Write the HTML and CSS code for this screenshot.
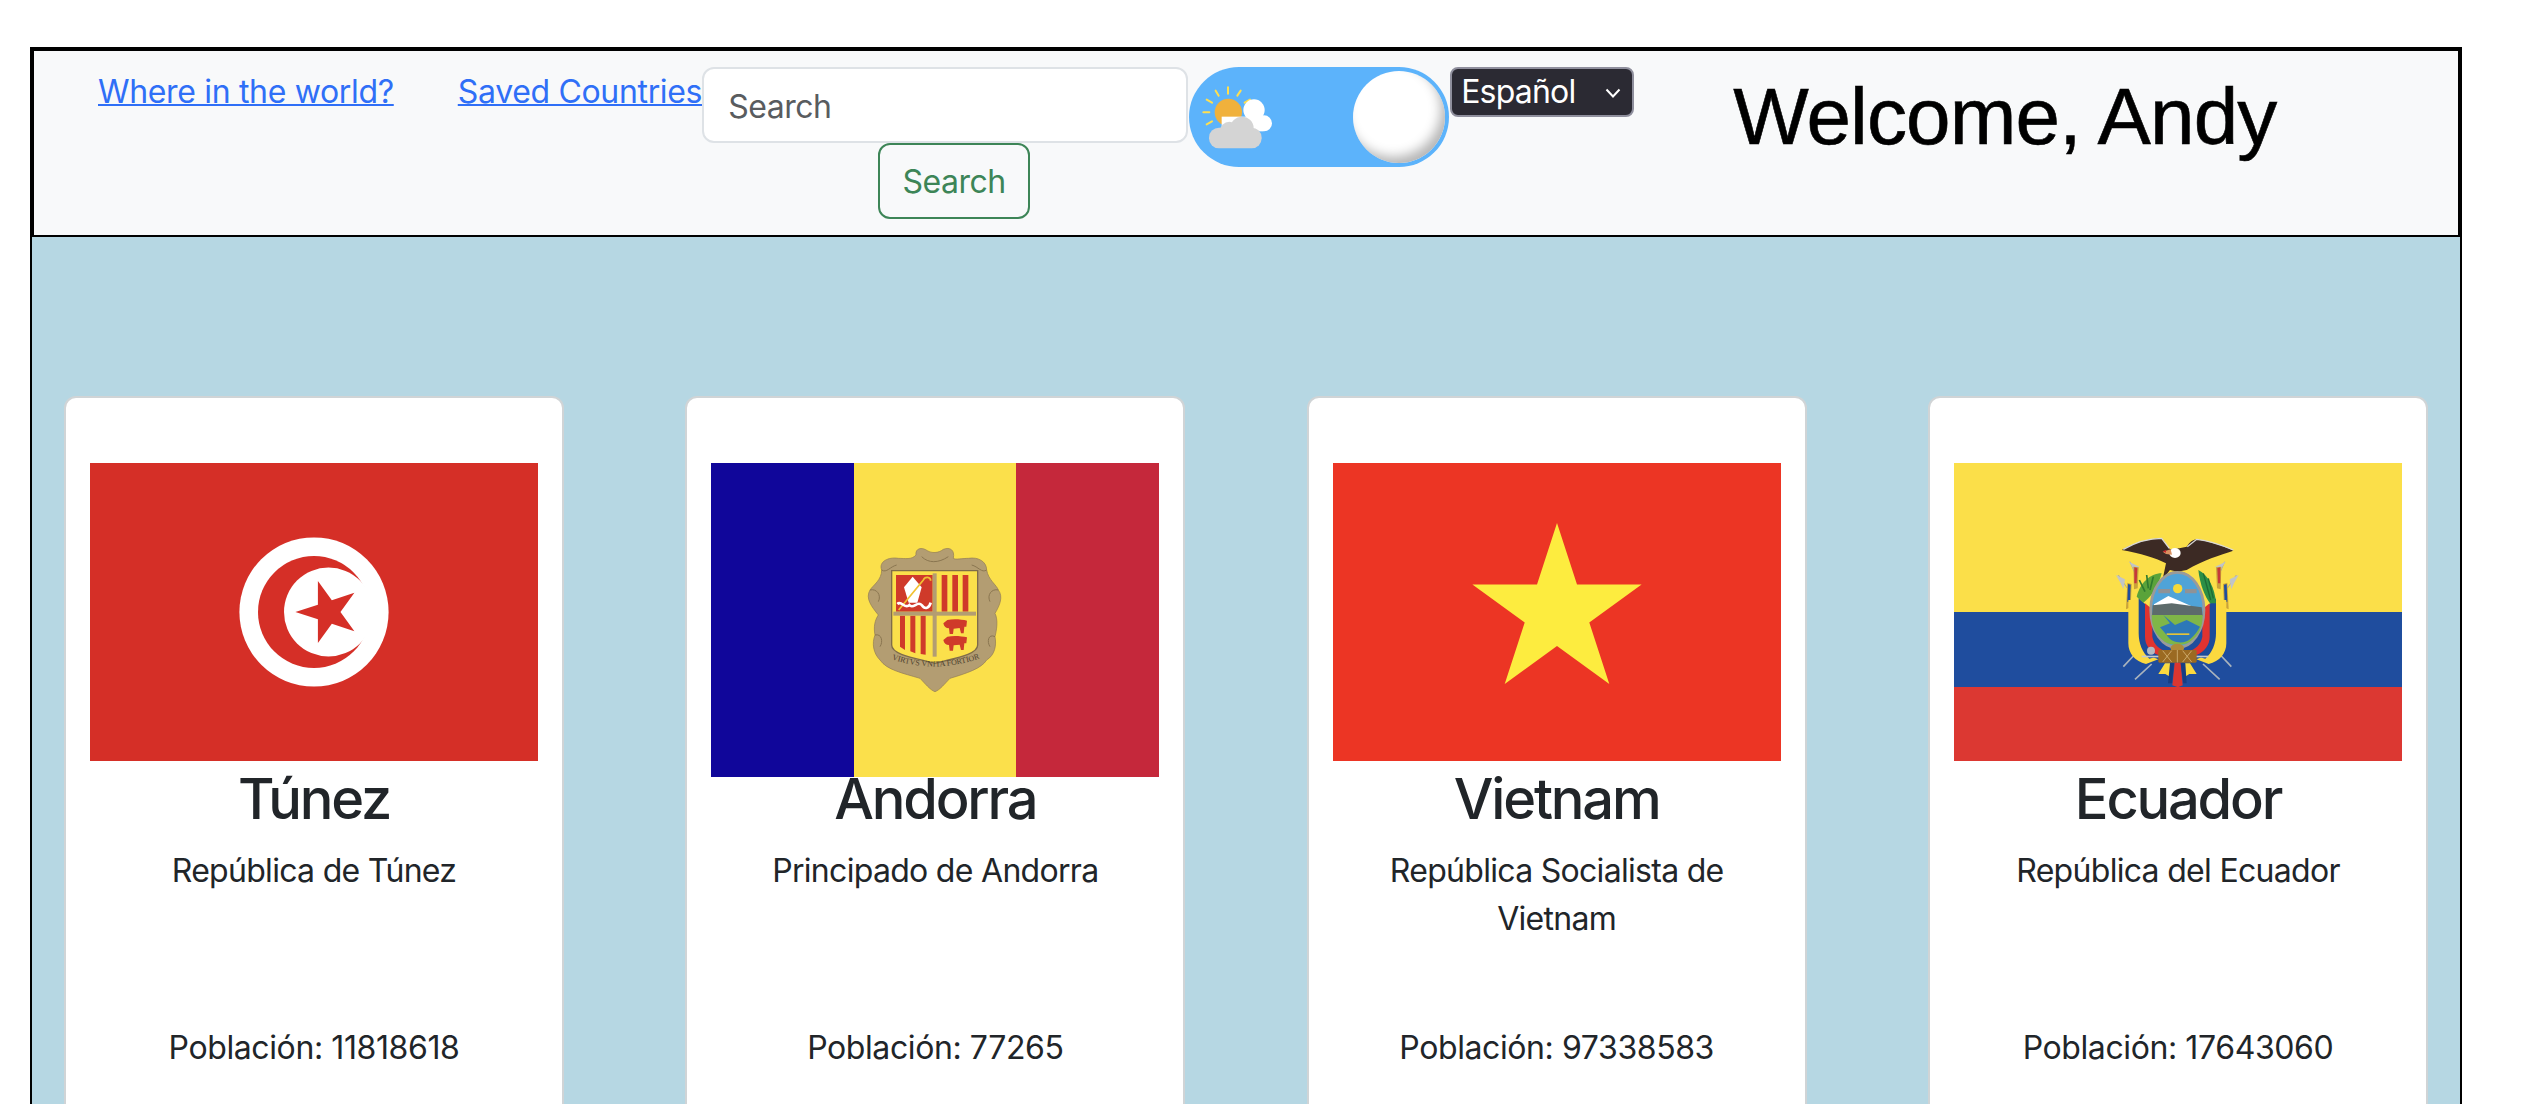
FILE: index.html
```html
<!DOCTYPE html>
<html>
	<head>
		<meta charset="utf-8">
		<title>Where in the world?</title>
		<link rel="stylesheet" href="styles.css">
	</head>
	<body>
		<div class="page">
			<nav class="topbar">
				<a class="nav-link" href="#">Where in the world?</a>
				<a class="nav-link" href="#">Saved Countries</a>
				<form class="search">
					<input class="search-input" type="text" placeholder="Search">
					<button class="search-btn" type="button">Search</button>
				</form>
				<div class="toggle">
					<svg class="toggle-icon" viewBox="60 90 225 195">
						<g stroke="#ffdf4f" stroke-width="6" stroke-linecap="round">
							<path d="M144 97V116M107 107L116 122M80 134L96 143M70 172H88M80 208L96 199M172 122L182 107M194 143L210 134"/>
						</g>
						<circle cx="145" cy="172" r="41" fill="#f0b13c"/>
						<g fill="#fff">
							<circle cx="222" cy="165" r="32"/>
							<circle cx="252" cy="205" r="24"/>
							<rect x="125" y="185" width="125" height="44"/>
						</g>
						<g fill="#d4d4d4">
							<circle cx="186" cy="220" r="35"/>
							<circle cx="148" cy="228" r="28"/>
							<rect x="87" y="218" width="158" height="62" rx="30"/>
						</g>
					</svg>
					<span class="knob"></span>
				</div>
				<div class="lang">
					<select class="lang-select">
						<option>Español</option>
						<option>English</option>
					</select>
					<svg class="lang-arrow" viewBox="0 0 16 10"><path d="M1.5 1.5L8 8.5L14.5 1.5" fill="none" stroke="#fff" stroke-width="2"/></svg>
				</div>
				<h1 class="welcome">Welcome, Andy</h1>
			</nav>

			<main class="cards">
				<div class="card">
					<div class="flag-box">
						<svg class="flag" width="448" height="298" viewBox="0 0 448 298">
							<rect width="448" height="298" fill="#d52f27"/>
							<circle cx="224" cy="149" r="74.6" fill="#fff"/>
							<circle cx="224" cy="149" r="56" fill="#d52f27"/>
							<circle cx="238.5" cy="149" r="44.5" fill="#fff"/>
							<polygon fill="#d52f27" points="205.4,149 227.9,141.7 227.9,118 241.85,137.2 264.4,129.8 250.45,149 264.4,168.2 241.85,160.8 227.9,180 227.9,156.3"/>
						</svg>
					</div>
					<h3 class="name">Túnez</h3>
					<p class="official">República de Túnez</p>
					<p class="people">Población: 11818618</p>
				</div>

				<div class="card">
					<div class="flag-box">
						<svg class="flag" width="448" height="314" viewBox="0 0 448 314">
							<rect width="143" height="314" fill="#10069a"/>
							<rect x="143" width="162" height="314" fill="#fbe04b"/>
							<rect x="305" width="143" height="314" fill="#c5283b"/>
							<g transform="translate(129 67) scale(.33333)">
								<path fill="#b39d72" stroke="#8f7a55" stroke-width="2" d="M228 75C225 55 245 50 262 62C275 70 295 70 310 58C330 50 345 60 340 85C345 90 370 85 385 85C415 80 440 95 440 120C445 150 470 165 475 180C490 200 480 225 465 250C475 270 470 300 465 320C470 345 465 375 440 390C425 415 380 430 330 445C315 460 300 480 285 485C270 480 255 460 240 445C190 430 140 420 120 390C100 370 95 340 105 315C100 290 105 270 115 255C95 230 75 205 90 180C100 165 125 150 125 120C115 95 145 80 175 85C195 85 215 90 228 75Z"/>
								<g fill="none" stroke="#8a7550" stroke-width="3">
									<path d="M125 120C140 130 150 110 170 105M440 120C425 130 415 110 395 105M90 180C110 175 125 195 115 215M475 180C455 175 440 195 450 215M105 315C125 310 130 335 120 350M465 320C445 310 440 335 450 350M245 80C265 100 295 100 325 80"/>
								</g>
								<path fill="#fbe04b" stroke="#7f6c4a" stroke-width="4" d="M155 122H413V345C413 375 340 385 285 400C230 385 155 375 155 345Z"/>
								<rect x="168" y="135" width="110" height="110" fill="#cf3a2a"/>
								<polygon points="218,140 245,172 232,218 206,218 192,172" fill="#fff"/>
								<path d="M176 240L250 150C255 138 272 140 272 152" fill="none" stroke="#f1c232" stroke-width="5"/>
								<path d="M172 222C185 210 195 240 208 225C220 240 232 210 245 225C255 240 268 235 272 218" fill="none" stroke="#fff" stroke-width="8"/>
								<g fill="#cf3a2a">
									<rect x="305" y="135" width="17" height="110"/>
									<rect x="337" y="135" width="17" height="110"/>
									<rect x="368" y="135" width="17" height="110"/>
									<path d="M180 257H195V360L180 350ZM211 257H226V370L211 364ZM242 257H257V374L242 372Z"/>
								</g>
								<rect x="278" y="130" width="12" height="250" fill="#b39d72"/>
								<rect x="160" y="245" width="248" height="12" fill="#b39d72"/>
								<path id="cow" d="M322 270C340 266 365 268 381 272L379 290L373 290L371 310L363 310L359 294L341 296L339 312L329 312L327 295C318 295 312 290 310 280Z" fill="#cf3a2a"/>
								<use href="#cow" y="50"/>
								<path id="motto" d="M155 388Q285 432 420 385" fill="none"/>
								<text class="motto"><textPath href="#motto">VIRTVS VNITA FORTIOR</textPath></text>
							</g>
						</svg>
					</div>
					<h3 class="name">Andorra</h3>
					<p class="official">Principado de Andorra</p>
					<p class="people">Población: 77265</p>
				</div>

				<div class="card">
					<div class="flag-box">
						<svg class="flag" width="448" height="298" viewBox="0 0 448 298">
							<rect width="448" height="298" fill="#ec3524"/>
							<polygon fill="#fdec3f" points="224,60 244,121.5 308.6,121.5 256.3,159.5 276.3,221 224,183 171.7,221 191.7,159.5 139.4,121.5 204,121.5"/>
						</svg>
					</div>
					<h3 class="name">Vietnam</h3>
					<p class="official">República Socialista de Vietnam</p>
					<p class="people">Población: 97338583</p>
				</div>

				<div class="card">
					<div class="flag-box">
						<svg class="flag" width="448" height="298" viewBox="0 0 448 298">
							<rect width="448" height="149" fill="#fbdf49"/>
							<rect y="149" width="448" height="75" fill="#1f4d9e"/>
							<rect y="224" width="448" height="74" fill="#dc3832"/>
							<g transform="translate(136 57) scale(.33333)">
								<g id="ec-side">
									<path d="M100 440L130 408M135 478L185 432" stroke="#a9b3bd" stroke-width="5"/>
									<path d="M85 165L112 205M120 125L137 165" stroke="#a8a8a8" stroke-width="3"/>
									<path d="M78 165L105 178L100 208L92 190ZM117 125L148 140L135 160L128 142Z" fill="#c0c4c8"/>
									<path d="M112 188L125 192L122 262L108 268Z" fill="#c9a23a"/>
									<path d="M114 192L122 194L120 245L112 245Z" fill="#1f4d9e"/>
									<path d="M130 140L146 142L143 205L132 208Z" fill="#c9a23a"/>
									<path d="M133 142L142 144L140 190L133 190Z" fill="#c5383a"/>
									<path d="M115 240H148L150 350C152 385 172 405 205 418L168 432C135 425 115 400 115 370Z" fill="#fbd93f"/>
									<path d="M146 235L172 258V340C174 375 192 395 218 405L178 416C158 400 146 370 146 340Z" fill="#1c4b9a"/>
									<path d="M165 250L187 268V350C192 375 207 385 228 395L205 405C180 395 165 375 165 350Z" fill="#e0332f"/>
								</g>
								<use href="#ec-side" transform="translate(524 0) scale(-1 1)"/>
								<path d="M140 230C150 190 180 160 215 160C205 200 180 235 160 248Z" fill="#5aa33a"/>
								<path d="M148 180L165 215M170 165L175 205M190 170L180 210" stroke="#2f7a2e" stroke-width="5"/>
								<path d="M378 250C375 205 355 165 325 150C330 195 345 230 360 250Z" fill="#2c8f46"/>
								<path d="M340 160L362 240M355 175L370 235" stroke="#1d6a35" stroke-width="4"/>
								<path d="M95 90C130 70 180 55 215 55C225 65 232 80 240 88L268 85L290 80C300 65 310 58 320 58C360 65 400 78 430 92C390 105 340 120 290 150L262 155L240 150L218 178L228 130C200 115 150 100 95 90Z" fill="#3c2a24"/>
								<path d="M100 88C135 68 180 55 215 55L238 85M430 90C395 75 360 62 320 58L292 80" fill="none" stroke="#d8d8d8" stroke-width="4"/>
								<ellipse cx="255" cy="99" rx="17" ry="15" fill="#fff"/>
								<path d="M218 95L242 88L246 104L228 102Z" fill="#d99060"/>
								<path d="M218 94L228 90L228 98Z" fill="#c8262a"/>
								<ellipse cx="262" cy="170" rx="34" ry="17" fill="#a98a3e"/>
								<ellipse cx="262" cy="270" rx="80" ry="113" fill="#4fa3d8" stroke="#9a9a9a" stroke-width="8"/>
								<circle cx="263" cy="206" r="14" fill="#f6d93a"/>
								<path d="M205 207H240V220H205ZM285 207H320V220H285Z" fill="#8f9296"/>
								<path d="M192 253L235 228L312 262L330 265V285H190Z" fill="#fff"/>
								<path d="M188 256L245 250L335 262L338 287H186Z" fill="#5d6b6b"/>
								<path d="M185 285H338C338 320 328 345 300 365C280 378 245 378 224 365C196 345 185 320 185 285Z" fill="#7fb648"/>
								<path d="M220 285L240 310L210 322L230 345C245 372 285 372 300 358C315 345 325 330 330 320L290 300L255 315Z" fill="#2d78b8"/>
								<rect x="230" y="340" width="68" height="5" fill="#e3c43a"/>
								<ellipse cx="262" cy="385" rx="20" ry="14" fill="#b08a3a"/>
								<rect x="155" y="407" width="200" height="5" fill="#c3c9cf"/>
								<circle cx="183" cy="392" r="12" fill="#b2bac2"/>
								<path d="M205 462L225 430H240V470L226 462ZM320 462L300 430H285V470L298 462Z" fill="#fbd93f"/>
								<rect x="205" y="390" width="115" height="38" rx="4" fill="#9b6a22"/>
								<path d="M218 392L245 426M245 392L218 426M278 392L305 426M305 392L278 426M262 390V428" stroke="#e2c68c" stroke-width="2"/>
								<path d="M254 428H272L278 496L264 502L247 496Z" fill="#dc3630"/>
								<path d="M240 430H252L246 490H234ZM272 430H286L290 490H280Z" fill="#183d82"/>
							</g>
						</svg>
					</div>
					<h3 class="name">Ecuador</h3>
					<p class="official">República del Ecuador</p>
					<p class="people">Población: 17643060</p>
				</div>
			</main>
		</div>
	</body>
</html>
```

FILE: styles.css
```css
* {margin: 0; padding: 0; box-sizing: border-box;}

body {
	height: 100vh;
	overflow: hidden;
	background: #fff;
	color: #212529;
	font-family: Inter, "Liberation Sans", sans-serif;
	font-size: 32px;
	line-height: 48px;
}

.page {
	width: 2432px;
	height: 1057px;
	margin: 47px 0 0 30px;
	border: 2px solid #000;
	border-bottom: 0;
	background: #b6d7e3;
}

.topbar {
	display: flex;
	align-items: flex-start;
	height: 188px;
	padding-top: 16px;
	border: 2px solid #000;
	background: #f8f9fa;
}

.nav-link {
	flex: none;
	margin-top: 1px;
	margin-left: 64px;
	color: #2f6ff7;
	letter-spacing: -0.33px;
	text-decoration-thickness: 2px;
	white-space: nowrap;
}

.search {
	display: flex;
	flex-direction: column;
	align-items: center;
	flex: none;
	width: 486px;
}

.search-input {
	width: 100%;
	height: 76px;
	padding: 2px 24px 0;
	border: 2px solid #dee2e6;
	border-radius: 12px;
	background: #fff;
	font: 32px/48px Inter, "Liberation Sans", sans-serif;
	letter-spacing: -0.5px;
}

.search-input::placeholder {
	color: #595c5f;
}

.search-btn {
	width: 152px;
	height: 76px;
	margin-left: 18px;
	padding-top: 2px;
	border: 2px solid #3d8557;
	border-radius: 12px;
	background: transparent;
	color: #3d8557;
	font: 32px/48px Inter, "Liberation Sans", sans-serif;
	letter-spacing: -0.5px;
}

.toggle {
	position: relative;
	display: flex;
	justify-content: flex-end;
	align-items: center;
	flex: none;
	width: 260px;
	height: 100px;
	margin-left: 1px;
	padding-right: 4px;
	border-radius: 50px;
	background: #5cb3fb;
}

.toggle-icon {
	position: absolute;
	left: 11px;
	top: 18px;
	width: 75px;
	height: 65px;
}

.knob {
	width: 92px;
	height: 92px;
	border-radius: 50%;
	background: #fff;
	box-shadow: inset -6px -8px 12px -2px #b5b5b5;
}

.lang {
	position: relative;
	flex: none;
	width: 184px;
	height: 50px;
	margin-left: 1px;
}

.lang-select {
	display: block;
	width: 100%;
	height: 100%;
	padding-left: 9px;
	border: 2px solid #8f8f9d;
	border-radius: 8px;
	background: #2b2a33;
	color: #fff;
	font: 32px/44px Inter, "Liberation Sans", sans-serif;
	letter-spacing: -0.8px;
	appearance: none;
}

.lang-arrow {
	position: absolute;
	right: 13px;
	top: 21px;
	width: 16px;
	height: 10px;
}

.welcome {
	margin-top: 2px;
	margin-left: 99px;
	color: #000;
	font-family: "Liberation Sans", sans-serif;
	font-size: 80px;
	font-weight: 400;
	letter-spacing: -0.85px;
	line-height: 96px;
	white-space: nowrap;
	-webkit-text-stroke: 0.6px #000;
}

.cards {
	display: flex;
	justify-content: space-between;
	padding: 159px 32px 0;
}

.card {
	width: 500px;
	height: 800px;
	padding: 24px;
	border: 2px solid #d0d4d6;
	border-radius: 12px;
	background: #fff;
	text-align: center;
}

.flag-box {
	height: 299px;
	margin-top: 41px;
	margin-bottom: 4px;
}

.flag {
	display: block;
}

.motto {
	fill: #4f4330;
	font-family: "Liberation Serif", serif;
	font-size: 24px;
}

.name {
	margin-bottom: 14px;
	font-size: 56px;
	font-weight: 500;
	letter-spacing: -2.2px;
	line-height: 67px;
}

.official {
	height: 144px;
	margin-bottom: 33px;
	letter-spacing: -0.7px;
}

.people {
	letter-spacing: -0.4px;
}
```
